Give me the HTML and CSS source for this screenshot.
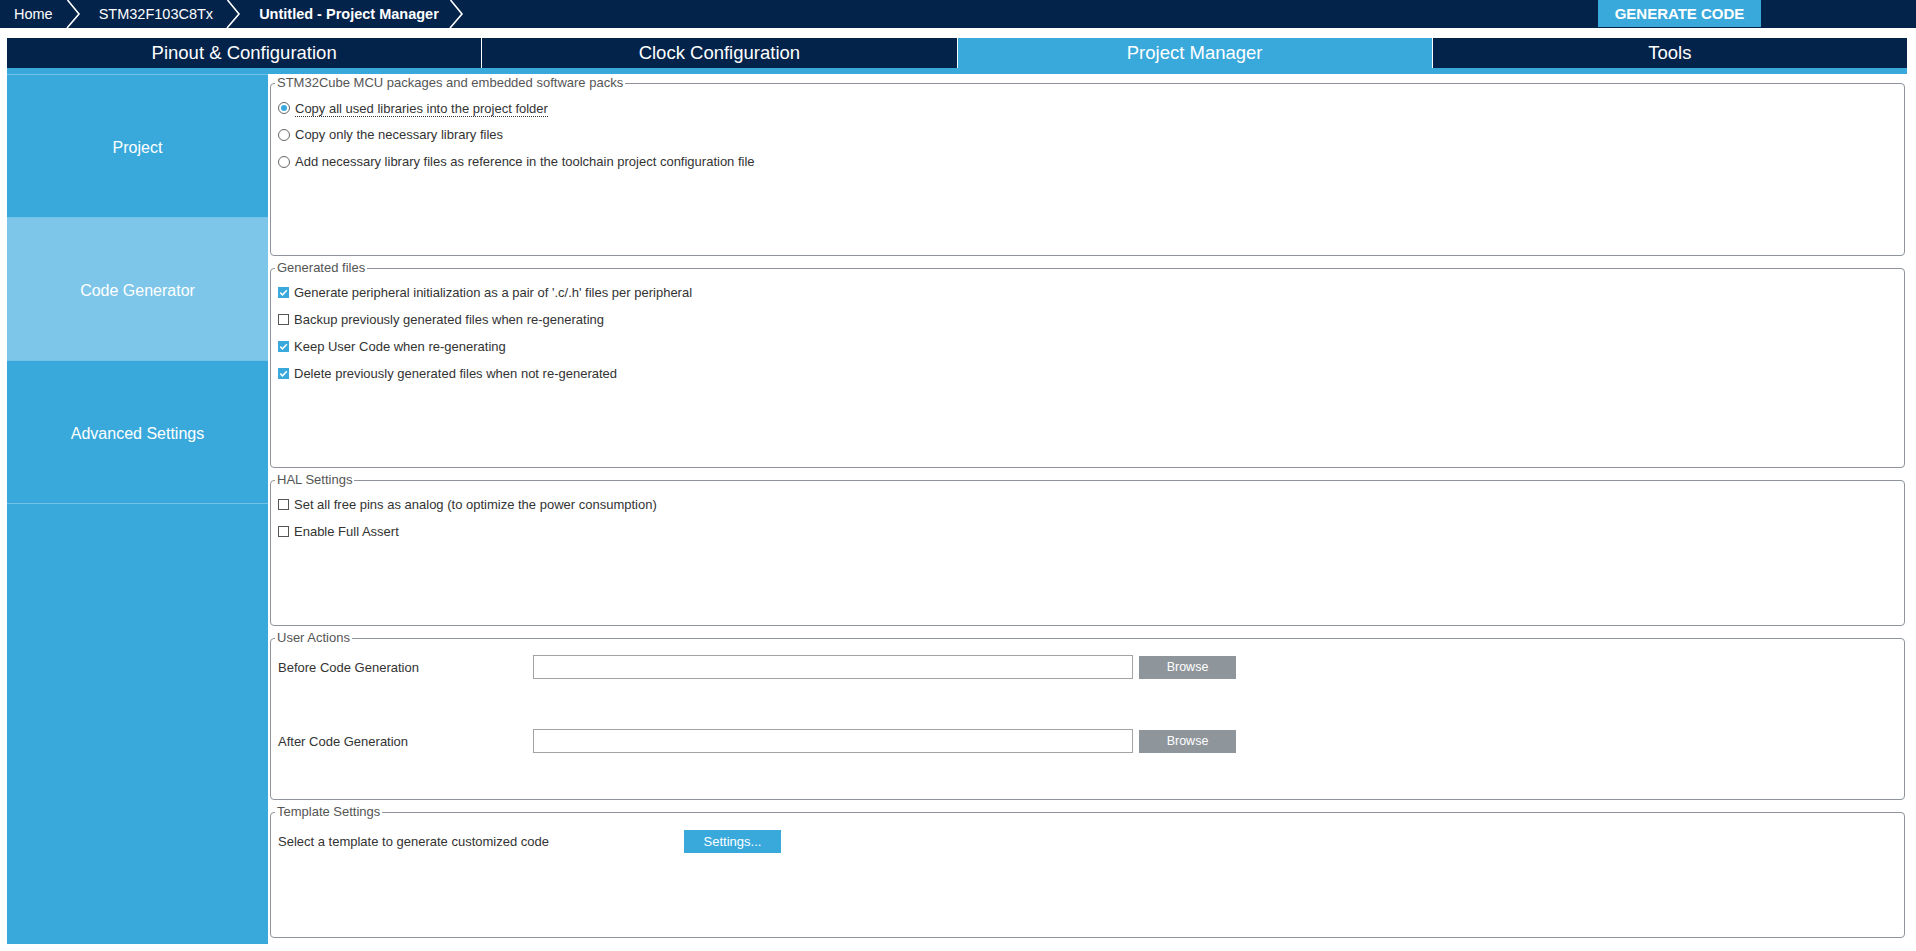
FILE: index.html
```html
<!DOCTYPE html>
<html lang="en">
<head>
<meta charset="utf-8">
<title>Untitled - Project Manager</title>
<link rel="stylesheet" href="styles.css">
</head>
<body>
<header class="topbar">
  <nav class="crumbs">
    <span class="crumb">Home</span>
    <svg class="chev" width="15" height="28" viewBox="0 0 15 28"><polyline points="1.5,0 13,14 1,28" fill="none" stroke="#fff" stroke-width="1.6"/></svg>
    <span class="crumb">STM32F103C8Tx</span>
    <svg class="chev" width="15" height="28" viewBox="0 0 15 28"><polyline points="1.5,0 13,14 1,28" fill="none" stroke="#fff" stroke-width="1.6"/></svg>
    <span class="crumb crumb-current">Untitled - Project Manager</span>
    <svg class="chev" width="15" height="28" viewBox="0 0 15 28"><polyline points="1.5,0 13,14 1,28" fill="none" stroke="#fff" stroke-width="1.6"/></svg>
  </nav>
  <button class="gen-btn">GENERATE CODE</button>
</header>

<nav class="tabs">
  <div class="tab">Pinout &amp; Configuration</div>
  <div class="tab">Clock Configuration</div>
  <div class="tab tab-active">Project Manager</div>
  <div class="tab">Tools</div>
</nav>
<div class="tab-strip"></div>

<main class="main">
  <aside class="sidebar">
    <div class="side-item">Project</div>
    <div class="side-item side-active">Code Generator</div>
    <div class="side-item">Advanced Settings</div>
  </aside>

  <section class="content">
    <fieldset class="panel panel-packages">
      <legend>STM32Cube MCU packages and embedded software packs</legend>
      <div class="opt"><span class="radio radio-on"></span><span class="opt-text opt-focus">Copy all used libraries into the project folder</span></div>
      <div class="opt"><span class="radio"></span><span class="opt-text">Copy only the necessary library files</span></div>
      <div class="opt"><span class="radio"></span><span class="opt-text">Add necessary library files as reference in the toolchain project configuration file</span></div>
    </fieldset>

    <fieldset class="panel panel-generated">
      <legend>Generated files</legend>
      <div class="opt"><span class="check check-on"><svg width="11" height="11" viewBox="0 0 11 11"><polyline points="2.3,5.6 4.5,7.8 8.8,3.2" fill="none" stroke="#fff" stroke-width="1.5"/></svg></span><span class="opt-text">Generate peripheral initialization as a pair of '.c/.h' files per peripheral</span></div>
      <div class="opt"><span class="check"></span><span class="opt-text">Backup previously generated files when re-generating</span></div>
      <div class="opt"><span class="check check-on"><svg width="11" height="11" viewBox="0 0 11 11"><polyline points="2.3,5.6 4.5,7.8 8.8,3.2" fill="none" stroke="#fff" stroke-width="1.5"/></svg></span><span class="opt-text">Keep User Code when re-generating</span></div>
      <div class="opt"><span class="check check-on"><svg width="11" height="11" viewBox="0 0 11 11"><polyline points="2.3,5.6 4.5,7.8 8.8,3.2" fill="none" stroke="#fff" stroke-width="1.5"/></svg></span><span class="opt-text">Delete previously generated files when not re-generated</span></div>
    </fieldset>

    <fieldset class="panel panel-hal">
      <legend>HAL Settings</legend>
      <div class="opt"><span class="check"></span><span class="opt-text">Set all free pins as analog (to optimize the power consumption)</span></div>
      <div class="opt"><span class="check"></span><span class="opt-text">Enable Full Assert</span></div>
    </fieldset>

    <fieldset class="panel panel-actions">
      <legend>User Actions</legend>
      <div class="action-row">
        <span class="action-label">Before Code Generation</span>
        <input class="path-input" type="text">
        <button class="browse-btn">Browse</button>
      </div>
      <div class="action-row action-row-2">
        <span class="action-label">After Code Generation</span>
        <input class="path-input" type="text">
        <button class="browse-btn">Browse</button>
      </div>
    </fieldset>

    <fieldset class="panel panel-template">
      <legend>Template Settings</legend>
      <div class="template-row">
        <span class="template-label">Select a template to generate customized code</span>
        <button class="settings-btn">Settings...</button>
      </div>
    </fieldset>
  </section>
</main>
</body>
</html>
```

FILE: styles.css
```css
html, body {
  margin: 0;
  padding: 0;
  background: #ffffff;
}
body {
  width: 1916px;
  height: 951px;
  overflow: hidden;
  font-family: "Liberation Sans", Arial, sans-serif;
  color: #333333;
}

/* ---------- top bar ---------- */
.topbar {
  height: 28px;
  background: #03234b;
  display: flex;
  align-items: flex-start;
}
.crumbs {
  display: flex;
  align-items: center;
  height: 28px;
  padding-left: 14px;
}
.crumb {
  color: #ffffff;
  font-size: 14.5px;
  line-height: 28px;
  padding-right: 13px;
  white-space: nowrap;
}
.crumb-current {
  font-weight: bold;
  padding-right: 10px;
}
.chev {
  display: block;
  margin-right: 18px;
  flex: none;
}
.gen-btn {
  margin-left: auto;
  margin-right: 155px;
  width: 163px;
  height: 27px;
  border: none;
  padding: 0;
  background: #39a9dc;
  color: #ffffff;
  font-family: "Liberation Sans", Arial, sans-serif;
  font-weight: bold;
  font-size: 15px;
}

/* ---------- tabs ---------- */
.tabs {
  display: grid;
  grid-template-columns: repeat(4, 1fr);
  column-gap: 1px;
  margin: 10px 9px 0 7px;
  height: 30px;
}
.tab {
  background: #03234b;
  color: #ffffff;
  font-size: 18.5px;
  line-height: 30px;
  text-align: center;
}
.tab-active {
  background: #39a9dc;
}
.tab-strip {
  height: 6px;
  margin: 0 9px 0 7px;
  background: #39a9dc;
}

/* ---------- main ---------- */
.main {
  display: flex;
  height: 870px;
  margin-left: 7px;
  margin-right: 11px;
}
.sidebar {
  width: 261px;
  flex: none;
  background: #39a9dc;
  border-top: 1px solid #74c2e7;
}
.side-item {
  height: 139px;
  padding-top: 3px;
  border-bottom: 1px solid #74c2e7;
  display: flex;
  align-items: center;
  justify-content: center;
  color: #ffffff;
  font-size: 16px;
  line-height: 20px;
}
.side-active {
  background: #7ec6e9;
}

.content {
  flex: 1;
  margin-left: 2px;
  padding-top: 2px;
  display: flex;
  flex-direction: column;
  gap: 5px;
}

/* ---------- panels ---------- */
.panel {
  margin: 0;
  padding: 4px 7px 0 7px;
  border: 1px solid #8e949a;
  border-radius: 4px;
  box-sizing: border-box;
  min-width: 0;
}
.panel legend {
  font-size: 13px;
  line-height: 14px;
  color: #555555;
  padding: 0 2px;
  margin-left: -3px;
}
.panel-packages { height: 180px; }
.panel-generated { height: 207px; }
.panel-hal { height: 153px; }
.panel-actions { height: 169px; padding-top: 10px; }
.panel-template { height: 133px; padding-top: 11px; }

.opt {
  height: 27px;
  display: flex;
  align-items: center;
  font-size: 13px;
}
.opt-text {
  margin-left: 5px;
  color: #333333;
  white-space: nowrap;
}
.opt-focus {
  border-bottom: 1px dotted #333333;
  line-height: 15px;
  margin-top: 2px;
}

.radio {
  width: 12px;
  height: 12px;
  box-sizing: border-box;
  border: 1px solid #666666;
  border-radius: 50%;
  background: #ffffff;
  display: flex;
  align-items: center;
  justify-content: center;
  flex: none;
}
.radio-on::after {
  content: "";
  width: 6px;
  height: 6px;
  border-radius: 50%;
  background: #39a9dc;
}

.check {
  width: 11px;
  height: 11px;
  box-sizing: border-box;
  border: 1px solid #555555;
  background: #ffffff;
  flex: none;
  display: block;
}
.check-on {
  border: none;
  background: #39a9dc;
}
.check svg {
  display: block;
}

/* user actions */
.action-row {
  display: flex;
  align-items: center;
  height: 24px;
  font-size: 13px;
}
.action-row-2 {
  margin-top: 50px;
}
.action-label {
  width: 255px;
  flex: none;
  color: #333333;
}
.path-input {
  width: 600px;
  height: 24px;
  box-sizing: border-box;
  border: 1px solid #a3a3a3;
  margin: 0;
  padding: 0 4px;
  background: #ffffff;
}
.browse-btn {
  margin-left: 6px;
  width: 97px;
  height: 23px;
  border: none;
  padding: 0;
  background: #8e959b;
  color: #ffffff;
  font-family: "Liberation Sans", Arial, sans-serif;
  font-size: 12.5px;
}

/* template */
.template-row {
  display: flex;
  align-items: center;
  height: 23px;
  font-size: 13px;
}
.template-label {
  width: 406px;
  flex: none;
  color: #333333;
}
.settings-btn {
  width: 97px;
  height: 23px;
  border: none;
  padding: 0;
  background: #39a9dc;
  color: #ffffff;
  font-family: "Liberation Sans", Arial, sans-serif;
  font-size: 13px;
}
```
